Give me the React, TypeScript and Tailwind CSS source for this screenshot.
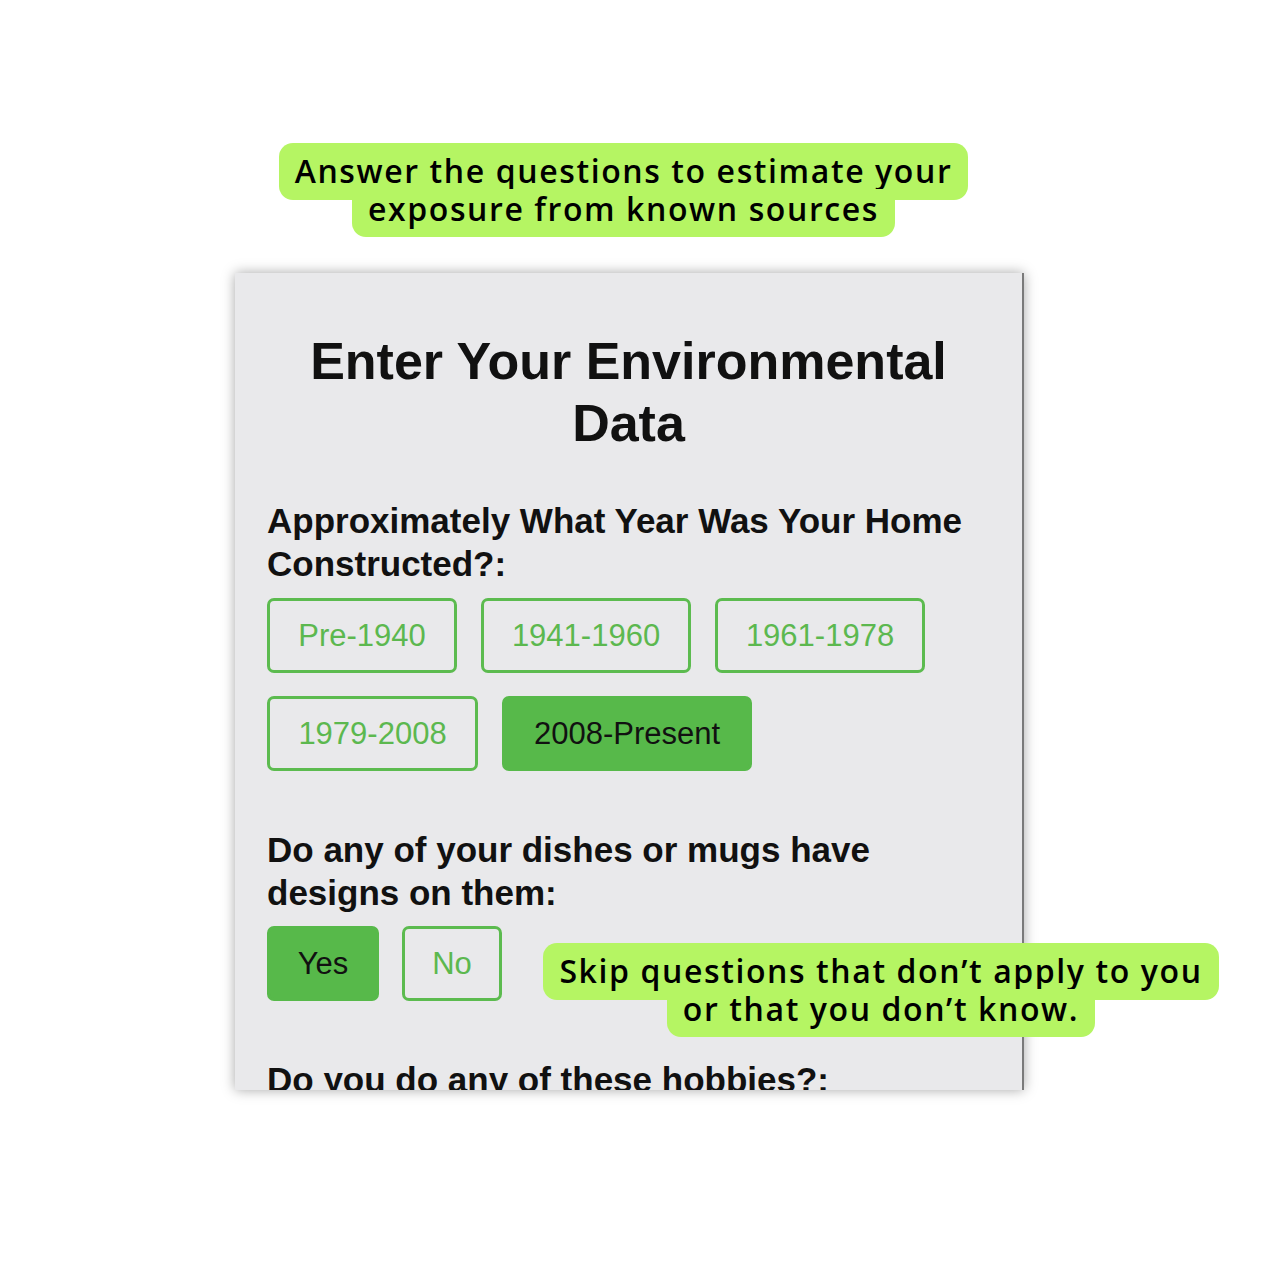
import React from "react";

const bubbleFont = { fontFamily: '"Open Sans", "Noto Sans", sans-serif' };
const uiFont = { fontFamily: '"Liberation Sans", Arial, Helvetica, sans-serif' };

function Bubble({ line1, line2 }: { line1: string; line2: string }) {
  return (
    <div className="flex flex-col items-center text-black font-medium" style={bubbleFont}>
      <div className="bg-[#b5f563] rounded-[14px] px-[16px] pt-[8px] pb-[10px] text-[32px] leading-[39px] tracking-[0.05em] whitespace-nowrap [font-weight:550]">
        {line1}
      </div>
      <div className="bg-[#b5f563] rounded-b-[14px] px-[16px] -mt-[11px] pb-[9px] text-[32px] leading-[39px] tracking-[0.05em] whitespace-nowrap [font-weight:550]">
        {line2}
      </div>
    </div>
  );
}

function Opt({ label, active, w }: { label: string; active?: boolean; w: string }) {
  return (
    <div
      className={
        "h-[75px] flex items-center justify-center rounded-[7px] border-[3px] text-[31px] leading-none " +
        w +
        " " +
        (active
          ? "bg-[#57b94a] border-[#57b94a] text-[#111]"
          : "border-[#5cbb4f] text-[#5cb84f]")
      }
    >
      {label}
    </div>
  );
}

export default function App() {
  return (
    <div className="relative w-[1280px] h-[1280px] bg-white overflow-hidden">
      <div className="pt-[143px] pr-[33px] flex justify-center">
        <Bubble
          line1="Answer the questions to estimate your"
          line2="exposure from known sources"
        />
      </div>
      <div
        className="mt-[36px] ml-[235px] w-[789px] h-[817px] overflow-hidden bg-[#e9e9eb] border-r-2 border-[#7a7a7a] shadow-[0_0_12px_rgba(0,0,0,0.35)] px-[32px] pt-[57px]"
        style={uiFont}
      >
        <h1 className="text-center font-bold text-[52px] leading-[62px] text-[#111]">
          Enter Your Environmental Data
        </h1>
        <div className="mt-[45px] font-bold text-[35px] leading-[43px] text-[#111]">
          Approximately What Year Was Your Home Constructed?:
        </div>
        <div className="mt-[13px] flex flex-wrap gap-x-[24px] gap-y-[23px] w-[700px]">
          <Opt label="Pre-1940" w="w-[190px]" />
          <Opt label="1941-1960" w="w-[210px]" />
          <Opt label="1961-1978" w="w-[210px]" />
          <Opt label="1979-2008" w="w-[211px]" />
          <Opt label="2008-Present" active w="w-[250px]" />
        </div>
        <div className="mt-[57px] font-bold text-[35px] leading-[43px] text-[#111]">
          Do any of your dishes or mugs have designs on them:
        </div>
        <div className="mt-[12px] flex gap-[23px]">
          <Opt label="Yes" active w="w-[112px]" />
          <Opt label="No" w="w-[100px]" />
        </div>
        <div className="mt-[57px] font-bold text-[35px] leading-[43px] text-[#111]">
          Do you do any of these hobbies?:
        </div>
      </div>
      <div className="absolute left-[545px] top-[943px]">
        <div className="w-[672px] flex justify-center">
          <Bubble
            line1="Skip questions that don’t apply to you"
            line2="or that you don’t know."
          />
        </div>
      </div>
    </div>
  );
}
